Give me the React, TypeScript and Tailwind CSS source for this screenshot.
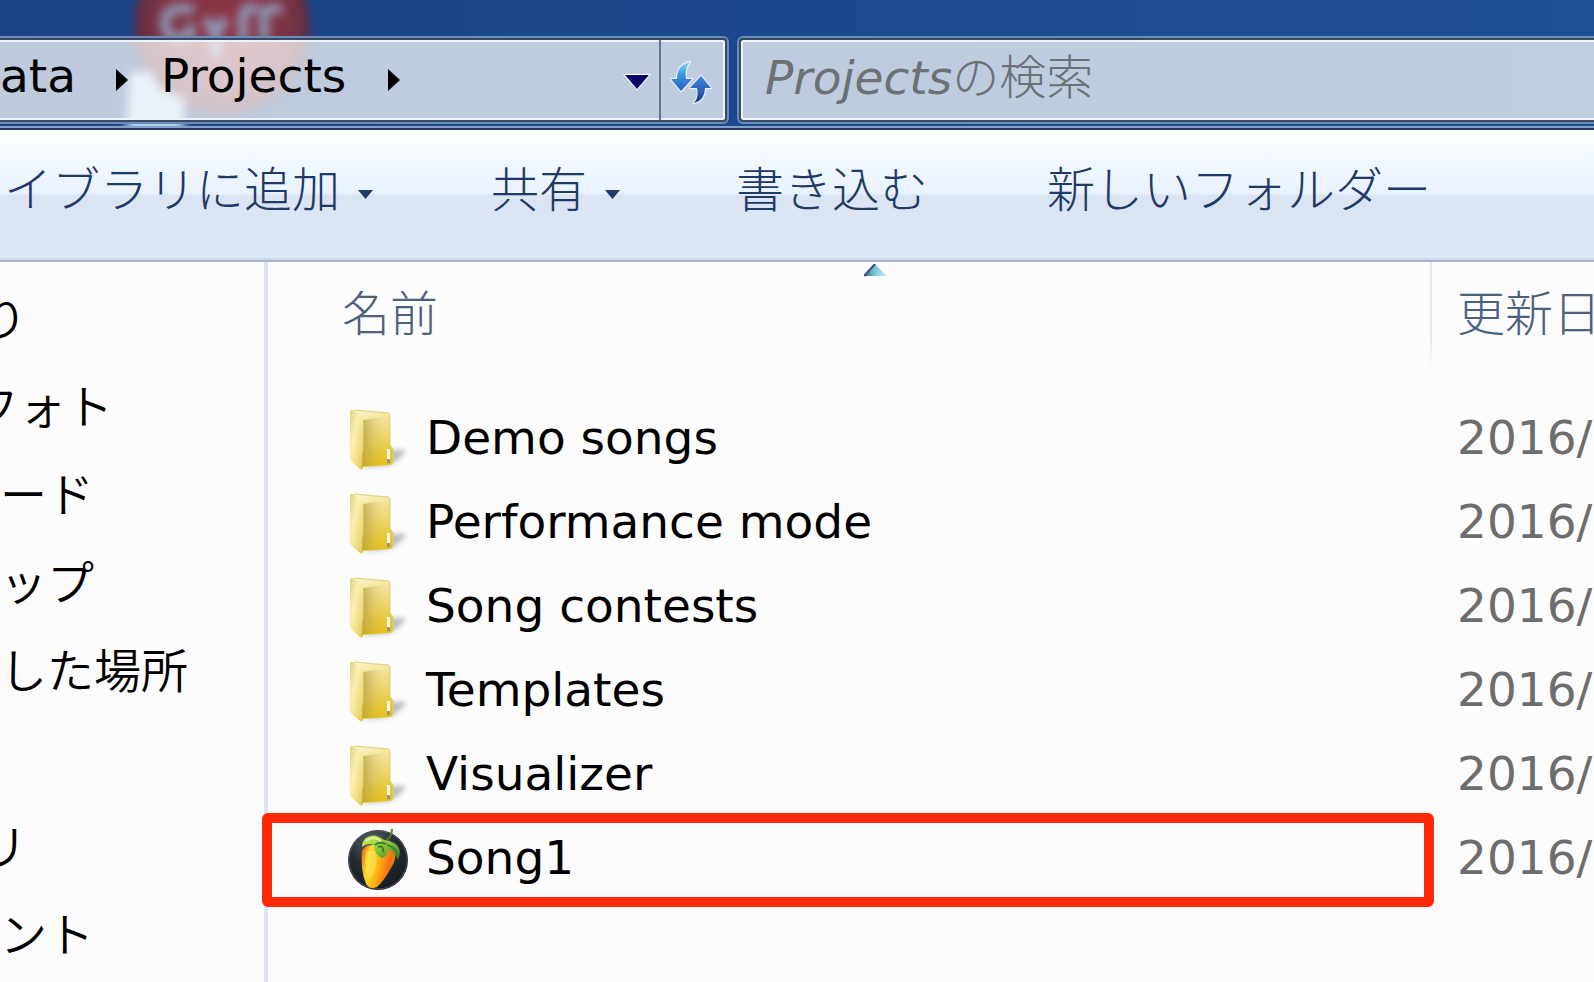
import { clsx } from "clsx";

const uiFont = "font-['DejaVu_Sans','Noto_Sans_CJK_JP',sans-serif]";

const sidebarItems = [
  { label: "り", indent: "-ml-5" },
  { label: "フォト", indent: "-ml-7" },
  { label: "ード", indent: "" },
  { label: "ップ", indent: "" },
  { label: "した場所", indent: "" },
  { label: "", indent: "" },
  { label: "リ", indent: "-ml-5" },
  { label: "ント", indent: "" },
];

const files = [
  { name: "Demo songs", type: "folder" },
  { name: "Performance mode", type: "folder" },
  { name: "Song contests", type: "folder" },
  { name: "Templates", type: "folder" },
  { name: "Visualizer", type: "folder" },
  { name: "Song1", type: "song" },
];

function FolderIcon() {
  return (
    <svg width="60" height="64" viewBox="0 0 60 64" className="block shrink-0" aria-hidden="true">
      <defs>
        <linearGradient id="folderFront" x1="0" y1="0" x2="1" y2="1">
          <stop offset="0" stopColor="#e3cf74" />
          <stop offset="0.35" stopColor="#f9f0b4" />
          <stop offset="0.7" stopColor="#f0dc7c" />
          <stop offset="1" stopColor="#dcbf48" />
        </linearGradient>
        <linearGradient id="folderBack" x1="0" y1="0" x2="0.3" y2="1">
          <stop offset="0" stopColor="#fbf6cc" />
          <stop offset="0.5" stopColor="#eedc84" />
          <stop offset="1" stopColor="#e6c420" />
        </linearGradient>
        <linearGradient id="folderFold" x1="0" y1="0" x2="1" y2="0">
          <stop offset="0" stopColor="#a88f34" stopOpacity="0.6" />
          <stop offset="1" stopColor="#d4b951" stopOpacity="0" />
        </linearGradient>
        <filter id="folderShadow" x="-30%" y="-30%" width="160%" height="160%">
          <feGaussianBlur stdDeviation="2.5" />
        </filter>
      </defs>
      <path d="M16 60 L40 42 L58 42 Q52 53 40 57 Z" fill="#777c84" opacity="0.5" filter="url(#folderShadow)" />
      <path d="M6 2 L40 5 Q42 5 42 8 V37 L45 41 V53 Q45 57 41 57 L14 59 Z" fill="url(#folderBack)" />
      <path d="M6 2 L40 5 Q42 5 42 8 V37 L45 41 V53" fill="none" stroke="#dfcd83" strokeWidth="1" />
      <path d="M15 12 L36 9 V57 L15 58 Z" fill="url(#folderFold)" />
      <path d="M2 4 Q2 1 5 2 L14 9 Q16 10 16 13 V43 L15 47 V59 Q15 63 12 61 L5 55 Q2 53 2 50 Z" fill="url(#folderFront)" />
      <path d="M15.500 12 V43 L14.500 47 V60" fill="none" stroke="#b99d35" strokeWidth="1" opacity="0.5" />
      <rect x="39" y="41" width="3" height="12" fill="#fffef4" />
      <rect x="39" y="51" width="3" height="4" fill="#8a93a8" />
    </svg>
  );
}

function SongIcon() {
  return (
    <svg width="62" height="64" viewBox="0 0 62 64" className="block shrink-0" aria-hidden="true">
      <defs>
        <radialGradient id="disc" cx="0.4" cy="0.2" r="0.9">
          <stop offset="0" stopColor="#59616b" />
          <stop offset="0.45" stopColor="#252b33" />
          <stop offset="1" stopColor="#101820" />
        </radialGradient>
        <linearGradient id="fruit" x1="0" y1="0.3" x2="1" y2="0.6">
          <stop offset="0" stopColor="#f07c08" />
          <stop offset="0.2" stopColor="#ffd92c" />
          <stop offset="0.5" stopColor="#ffb514" />
          <stop offset="0.8" stopColor="#f2700f" />
          <stop offset="1" stopColor="#e8901a" />
        </linearGradient>
        <linearGradient id="leaf" x1="0" y1="0" x2="1" y2="1">
          <stop offset="0" stopColor="#d6ec62" />
          <stop offset="0.5" stopColor="#8cc63a" />
          <stop offset="1" stopColor="#2e7a22" />
        </linearGradient>
      </defs>
      <circle cx="30" cy="32" r="30" fill="url(#disc)" />
      <circle cx="30" cy="32" r="29" fill="none" stroke="#4a535c" strokeWidth="1" />
      <path d="M14 23 Q17 16 27 17 L46 23 Q50 29 43 40 Q36 53 29 59 Q22 62 18 56 Q12 40 14 23 Z" fill="url(#fruit)" />
      <path d="M18 23 Q16 39 21 52 Q31 41 28 23 Z" fill="#fff27a" opacity="0.4" />
      <path d="M39 12 Q44 8 44 1" fill="none" stroke="#5a7a2c" strokeWidth="2" />
      <path d="M36 12 Q26 4 18 10 Q14 13 14 19 Q20 14 26 17 Q26 27 34 30 Q41 28 39 21 Q46 22 50 32 Q55 20 46 15 Q41 12 36 12 Z" fill="url(#leaf)" />
      <path d="M27 17 Q30 13 38 16 M30 19 Q36 17 35 24 M39 17 Q47 19 50 27" fill="none" stroke="#3b852c" strokeWidth="2" />
      <path d="M18 13 Q25 7 33 13" fill="none" stroke="#e4f59a" strokeWidth="2" />
    </svg>
  );
}

function RefreshIcon() {
  return (
    <svg width="44" height="44" viewBox="0 0 44 44" className="block" aria-hidden="true">
      <defs>
        <linearGradient id="arrowDown" x1="0" y1="0" x2="0" y2="1">
          <stop offset="0" stopColor="#8fe0f8" />
          <stop offset="0.4" stopColor="#3a9be0" />
          <stop offset="1" stopColor="#2a5fbe" />
        </linearGradient>
        <linearGradient id="arrowUp" x1="0" y1="0" x2="0" y2="1">
          <stop offset="0" stopColor="#3f86dc" />
          <stop offset="0.6" stopColor="#2d5dba" />
          <stop offset="1" stopColor="#1c2f74" />
        </linearGradient>
      </defs>
      <g stroke="#e6eefa" strokeWidth="2.500" strokeLinejoin="round" paintOrder="stroke">
        <path d="M21 2 Q8 5 8 19 H2 L12 31 L23 19 H17 Q15 9 21 2 Z" fill="url(#arrowDown)" />
        <path d="M25 43 Q36 40 36 28 H42 L32 16 L21 28 H28 Q30 38 25 43 Z" fill="url(#arrowUp)" />
      </g>
    </svg>
  );
}

function Chevron() {
  return (
    <svg width="13" height="24" viewBox="0 0 13 24" className="block shrink-0" aria-hidden="true">
      <path d="M0 1 L12 12 L0 23 Z" fill="#000" />
    </svg>
  );
}

function MenuArrow() {
  return (
    <svg width="15" height="9" viewBox="0 0 15 9" className="mt-2 block" aria-hidden="true">
      <path d="M0 0 H15 L7.500 9 Z" fill="#1f3a66" />
    </svg>
  );
}

// blurred desktop icon showing through the glass frame
function GlassBackdrop() {
  return (
    <svg width="330" height="128" viewBox="0 0 330 128" className="absolute left-0 top-0" aria-hidden="true">
      <defs>
        <radialGradient id="ball" cx="0.5" cy="0.45" r="0.5">
          <stop offset="0" stopColor="#8c3645" />
          <stop offset="0.75" stopColor="#7c3444" />
          <stop offset="1" stopColor="#5c2c42" />
        </radialGradient>
        <filter id="soft" x="-20%" y="-20%" width="140%" height="140%">
          <feGaussianBlur stdDeviation="5" />
        </filter>
      </defs>
      <circle cx="222" cy="27" r="88" fill="url(#ball)" filter="url(#soft)" />
      <g fill="none" stroke="#8f95b5" strokeWidth="10" filter="url(#soft)">
        <path d="M194 10 Q166 4 165 22 Q166 44 190 36 V24" />
        <path d="M206 18 L215 36 L225 18 M216 36 V58" />
        <path d="M243 40 V14 Q246 6 258 9 M264 40 V12 Q268 6 282 10" />
      </g>
      <path d="M130 72 H152 Q156 94 184 96 V134 H126 Z" fill="#d0e8fc" opacity="0.85" filter="url(#soft)" />
    </svg>
  );
}

function AddressBar() {
  return (
    <header className="relative flex h-[130px] items-start gap-2 overflow-hidden border-b-2 border-[#26375c] bg-linear-to-r from-[#1a4386] to-[#1d4f95] pt-9">
      <GlassBackdrop />
      <div className="relative h-[88px] w-[729px] shrink-0 rounded-r-md border-y-2 border-r-2 border-[#6b8cb8]">
        <nav className="flex h-full items-center rounded-r border-y-2 border-r-2 border-y-[#3b4a63] border-r-[#3b4a63] bg-white/72 shadow-[inset_-2px_0_0_#eef3fa,inset_0_2px_0_#eef3fa,inset_0_-2px_0_#eef3fa]">
          <a href="#data" className="w-[116px] pb-2">ata</a>
          <Chevron />
          <a href="#projects" className="w-[259px] pb-2 pl-8">Projects</a>
          <Chevron />
          <button type="button" aria-label="履歴" className="ml-auto mr-2 flex pt-1">
            <svg width="28" height="18" viewBox="0 0 28 18" className="block" aria-hidden="true">
              <path d="M2 2 H26 L14 16 Z" fill="#0a0464" stroke="#fff" strokeWidth="2" paintOrder="stroke" />
            </svg>
          </button>
          <button type="button" aria-label="更新" className="flex h-full w-[66px] items-center border-l-2 border-[#66758c] pl-2 pt-1">
            <RefreshIcon />
          </button>
        </nav>
      </div>
      <div className="relative h-[88px] min-w-0 flex-1 rounded-l-md border-y-2 border-l-2 border-[#6b8cb8]">
        <div className="relative h-full rounded-l border-y-2 border-l-2 border-[#3b4a63] bg-white/72 shadow-[inset_2px_0_0_#eef3fa,inset_0_2px_0_#eef3fa,inset_0_-2px_0_#eef3fa]">
          <input id="search" type="text" className="h-full w-full bg-transparent px-6 outline-none" />
          <label htmlFor="search" className="pointer-events-none absolute inset-0 flex items-center whitespace-nowrap pb-1 pl-6 text-[#6d7174]">
            <i>Projects</i>
            <span className="font-light">の検索</span>
          </label>
        </div>
      </div>
      <div className="absolute inset-x-0 bottom-0 h-0.5 bg-[#849fc8]" />
    </header>
  );
}

function Toolbar() {
  return (
    <div className="flex h-[132px] items-start whitespace-nowrap border-b-2 border-[#a9b4ca] bg-[linear-gradient(to_bottom,#ffffff_0px,#f3f9ff_26px,#e8f2fe_64px,#dbe4f3_65px,#dce6f5_124px,#e0ebfa_127px,#c9d5e7_129px)] pt-7 text-[48px] font-light text-[#1f3a66]">
      <button type="button" className="flex w-[491px] items-center gap-[18px] pl-1">
        イブラリに追加
        <MenuArrow />
      </button>
      <button type="button" className="flex w-[245px] items-center gap-[18px]">
        共有
        <MenuArrow />
      </button>
      <button type="button" className="w-[311px] text-left">書き込む</button>
      <button type="button">新しいフォルダー</button>
    </div>
  );
}

export default function App() {
  return (
    <div className={clsx(uiFont, "flex min-h-screen flex-col overflow-hidden bg-[#fcfcfc] text-[47px] leading-[64px] text-black")}>
      <AddressBar />
      <Toolbar />
      <main className="flex flex-1">
        <aside className="w-[268px] shrink-0 overflow-hidden border-r-4 border-[#dbe4f5]">
          <ul className="pt-3.5 text-[47px] font-[350]">
            {sidebarItems.map((item, i) => (
              <li key={i} className={clsx("h-[88px] whitespace-nowrap leading-[88px]", item.indent)}>
                {item.label && <a href="#place">{item.label}</a>}
              </li>
            ))}
          </ul>
        </aside>
        <section className="relative min-w-0 flex-1">
          <svg width="24" height="13" viewBox="0 0 24 13" className="absolute left-1/2 top-0.5 -ml-[67px]" aria-hidden="true">
            <defs>
              <linearGradient id="sort" x1="0" y1="0" x2="1" y2="0">
                <stop offset="0" stopColor="#2f6484" />
                <stop offset="0.45" stopColor="#7cc0de" />
                <stop offset="1" stopColor="#cdeefa" />
              </linearGradient>
            </defs>
            <path d="M0 12 L11 0 L23 12 Z" fill="url(#sort)" />
            <path d="M0 12 L11 0" stroke="#2b5672" strokeWidth="2" />
          </svg>
          <table className="w-full table-fixed border-collapse text-left">
            <thead>
              <tr className="h-[136px] align-top text-[48px] text-[#4c607f]">
                <th className="pl-[74px] pt-5 font-light">名前</th>
                <th className="relative w-[164px] whitespace-nowrap pl-[27px] pt-5 font-light">
                  <span className="absolute left-0 top-0 h-[105px] w-0.5 bg-linear-to-b from-[#dfe7f5] from-70% to-transparent" />
                  <span className="block overflow-hidden">更新日</span>
                </th>
              </tr>
            </thead>
            <tbody>
              {files.map((file) => (
                <tr key={file.name} className="h-[84px]">
                  <td className="relative p-0">
                    <div className="flex items-center pl-20">
                      <span className="w-[78px]">{file.type === "folder" ? <FolderIcon /> : <SongIcon />}</span>
                      <a href="#open" className="pb-1">{file.name}</a>
                    </div>
                    {file.type === "song" && (
                      <span className="pointer-events-none absolute -inset-y-[5px] -left-1.5 -right-1 rounded-md border-[10px] border-[#ff2a05]" />
                    )}
                  </td>
                  <td className="overflow-hidden whitespace-nowrap p-0 pb-1 pl-[27px] text-[#6d6d6d]">2016/</td>
                </tr>
              ))}
            </tbody>
          </table>
        </section>
      </main>
    </div>
  );
}
